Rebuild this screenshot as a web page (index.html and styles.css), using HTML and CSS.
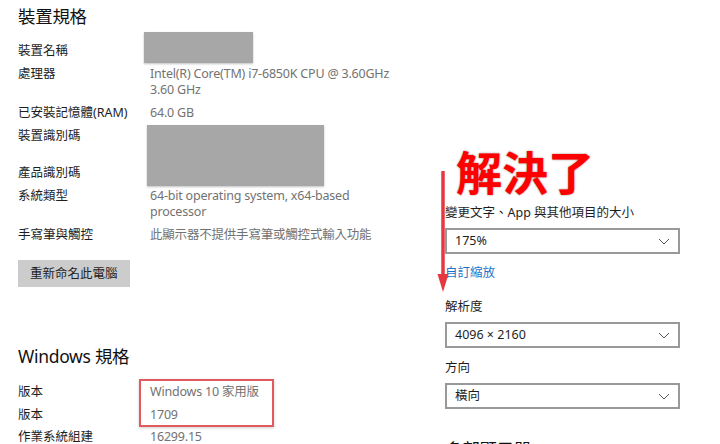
FILE: index.html
```html
<!DOCTYPE html>
<html>
	<head>
		<title>系統 - 關於</title>
		<meta charset="UTF-8">
		<link rel="stylesheet" href="styles.css">
	</head>
	<body>
		<div class="page">
			<div class="about">
				<h2 class="sectionTitle">裝置規格</h2>
				<div class="specGrid">
					<div class="label">裝置名稱</div>
					<div class="value"><span class="redact redactName"></span>&nbsp;</div>
					<div class="label">處理器</div>
					<div class="value">Intel(R) Core(TM) i7-6850K CPU @ 3.60GHz<br>3.60 GHz</div>
					<div class="label">已安裝記憶體(RAM)</div>
					<div class="value">64.0 GB</div>
					<div class="label">裝置識別碼</div>
					<div class="value tallValue"><span class="redact redactId"></span></div>
					<div class="label">產品識別碼</div>
					<div class="value">&nbsp;</div>
					<div class="label">系統類型</div>
					<div class="value">64-bit operating system, x64-based<br>processor</div>
					<div class="label">手寫筆與觸控</div>
					<div class="value">此顯示器不提供手寫筆或觸控式輸入功能</div>
				</div>
				<div class="renameBtn">重新命名此電腦</div>

				<h2 class="sectionTitle winTitle">Windows 規格</h2>
				<div class="specGrid winGrid">
					<div class="label">版本</div>
					<div class="value">Windows 10 家用版</div>
					<div class="label">版本</div>
					<div class="value">1709</div>
					<div class="label">作業系統組建</div>
					<div class="value">16299.15</div>
					<div class="markBox"></div>
				</div>
			</div>

			<div class="display">
				<div class="solved">解決了</div>
				<div class="fieldLabel">變更文字、App 與其他項目的大小</div>
				<div class="dropdown">175%<svg class="chevron" width="12" height="7" viewBox="0 0 12 7"><polyline points="1,1 6,6 11,1" fill="none" stroke="#555" stroke-width="1"/></svg></div>
				<div class="link">自訂縮放</div>
				<div class="fieldLabel gapTop">解析度</div>
				<div class="dropdown">4096 × 2160<svg class="chevron" width="12" height="7" viewBox="0 0 12 7"><polyline points="1,1 6,6 11,1" fill="none" stroke="#555" stroke-width="1"/></svg></div>
				<div class="fieldLabel">方向</div>
				<div class="dropdown">橫向<svg class="chevron" width="12" height="7" viewBox="0 0 12 7"><polyline points="1,1 6,6 11,1" fill="none" stroke="#555" stroke-width="1"/></svg></div>
				<h2 class="sectionTitle multiTitle">多部顯示器</h2>
			</div>

			<!-- annotation arrow -->
			<svg class="arrow" width="14" height="124" viewBox="0 0 14 124">
				<line x1="7" y1="1" x2="7" y2="108" stroke="#e5393f" stroke-width="3.5" stroke-linecap="round"/>
				<polygon points="1.5,103 12.5,103 7,121" fill="#e5393f"/>
			</svg>
		</div>
	</body>
</html>
```

FILE: styles.css
```css
body{
	margin: 0;
	background-color: white;
	font-family: "Noto Sans", "Noto Sans CJK TC", sans-serif;
	font-size: 12.5px;
	color: #1e1e1e;
	overflow: hidden;
}
.page{
	position: relative;
	display: flex;
	height: 444px;
}
.about{
	width: 427px;
	padding-left: 18px;
}
.sectionTitle{
	font-size: 17.5px;
	font-weight: normal;
	line-height: 24px;
	margin: 4px 0 15px 0;
	color: #111;
	letter-spacing: -0.3px;
}
.specGrid{
	display: grid;
	grid-template-columns: 132px 1fr;
	row-gap: 7px;
	line-height: 16px;
}
.value{
	position: relative;
	color: #727272;
	letter-spacing: -0.2px;
}
.tallValue{
	height: 30px;
}
.redact{
	position: absolute;
	background-color: #a7a7a7;
	box-shadow: 0 1px 2px rgba(0,0,0,0.25);
}
.redactName{
	left: -6px;
	top: -11px;
	width: 109px;
	height: 31px;
}
.redactId{
	left: -3px;
	top: -3px;
	width: 177px;
	height: 61px;
}
.renameBtn{
	display: inline-block;
	margin-top: 17px;
	height: 27px;
	line-height: 27px;
	padding: 0 12px;
	background-color: #cccccc;
	color: #1e1e1e;
}
.winTitle{
	margin-top: 57px;
	margin-bottom: 16px;
}
.winGrid{
	position: relative;
	row-gap: 6.5px;
}
.markBox{
	position: absolute;
	left: 121px;
	top: -5px;
	width: 131px;
	height: 44px;
	border: 2px solid #e05a5e;
	box-shadow: 0 1px 3px rgba(0,0,0,0.2);
}
.display{
	width: 235px;
	padding-top: 146px;
}
.solved{
	font-size: 46px;
	font-weight: bold;
	line-height: 53px;
	height: 53px;
	margin-left: 11px;
	color: #ff0000;
	text-shadow: 0 0 2px rgba(80,0,0,0.6);
}
.fieldLabel{
	line-height: 16px;
	margin-top: 6px;
	margin-bottom: 7px;
}
.gapTop{
	margin-top: 18px;
}
.dropdown{
	display: flex;
	justify-content: space-between;
	align-items: center;
	height: 22px;
	border: 2px solid #999;
	padding: 0 8px 0 8px;
	line-height: 22px;
	margin-bottom: 12px;
}
.link{
	color: #1a73c8;
	line-height: 16px;
	margin-top: -1px;
}
.multiTitle{
	margin-top: 28px;
}
.arrow{
	position: absolute;
	left: 436px;
	top: 171px;
}
```
